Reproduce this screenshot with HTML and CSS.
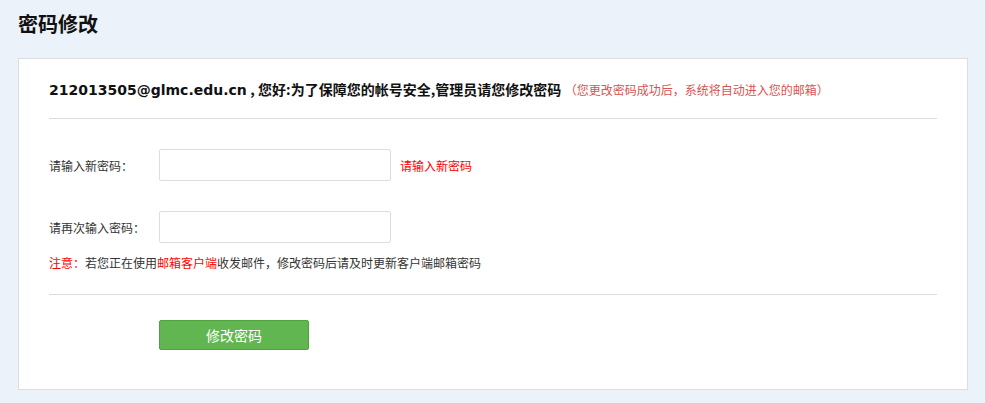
FILE: index.html
```html
<!DOCTYPE html>
<html lang="zh-CN">
<head>
  <meta charset="UTF-8">
  <title>密码修改</title>
  <link rel="stylesheet" href="styles.css">
</head>
<body>
  <div class="page">
    <h2 class="page-title">密码修改</h2>
    <section class="panel">
      <div class="panel-head">
        <span class="account">212013505@glmc.edu.cn</span>
        <span class="greet">, 您好:为了保障您的帐号安全,管理员请您修改密码</span>
        <span class="tip">（您更改密码成功后，系统将自动进入您的邮箱）</span>
      </div>
      <form class="pwd-form">
        <div class="form-row">
          <label for="newPwd">请输入新密码：</label>
          <input type="password" id="newPwd" name="newPwd">
          <span class="hint">请输入新密码</span>
        </div>
        <div class="form-row">
          <label for="rePwd">请再次输入密码：</label>
          <input type="password" id="rePwd" name="rePwd">
        </div>
        <p class="notice"><em>注意：</em>若您正在使用<em>邮箱客户端</em>收发邮件，修改密码后请及时更新客户端邮箱密码</p>
        <div class="form-foot">
          <button type="submit">修改密码</button>
        </div>
      </form>
    </section>
  </div>
</body>
</html>
```

FILE: styles.css
```css
/* Page */
body {
    margin: 0;
    background-color: #ebf2f9;
    font-family: "Noto Sans CJK SC", "DejaVu Sans", sans-serif;
    color: #333333;
}

.page {
    padding: 0 17px 0 18px;
}

.page-title {
    margin: 0;
    height: 58px;
    line-height: 48px;
    font-size: 20px;
    font-weight: bold;
    color: #111111;
}

/* Panel */
.panel {
    background-color: #ffffff;
    border: 1px solid #dddddd;
    padding: 0 30px 39px;
}

.panel-head {
    height: 59px;
    line-height: 59px;
    border-bottom: 1px solid #dddddd;
    white-space: nowrap;
}

.account {
    font-family: "DejaVu Sans", sans-serif;
    font-size: 14px;
    font-weight: bold;
    color: #111111;
}

.greet {
    font-size: 14px;
    font-weight: bold;
    color: #111111;
}

.tip {
    font-size: 12px;
    color: #d9534f;
}

/* Form */
.pwd-form {
    padding-top: 30px;
}

.form-row {
    display: flex;
    align-items: center;
    margin-bottom: 30px;
}

.form-row:nth-child(2) {
    margin-bottom: 8px;
}

.form-row label {
    width: 110px;
    font-size: 12px;
}

.form-row input {
    width: 232px;
    height: 32px;
    box-sizing: border-box;
    border: 1px solid #dddddd;
    border-radius: 2px;
    padding: 0 8px;
    margin: 0;
}

.hint {
    margin-left: 9px;
    font-size: 12px;
    color: #ff0000;
}

.notice {
    margin: 0;
    height: 43px;
    line-height: 24px;
    font-size: 12px;
    border-bottom: 1px solid #dddddd;
}

.notice em {
    font-style: normal;
    color: #ff0000;
}

.form-foot {
    padding: 25px 0 0 110px;
}

.form-foot button {
    width: 150px;
    height: 30px;
    background-color: #62b651;
    border: 1px solid #4fa33d;
    border-radius: 2px;
    color: #ffffff;
    font-family: "Noto Sans CJK SC", sans-serif;
    font-size: 14px;
    cursor: pointer;
}
```
